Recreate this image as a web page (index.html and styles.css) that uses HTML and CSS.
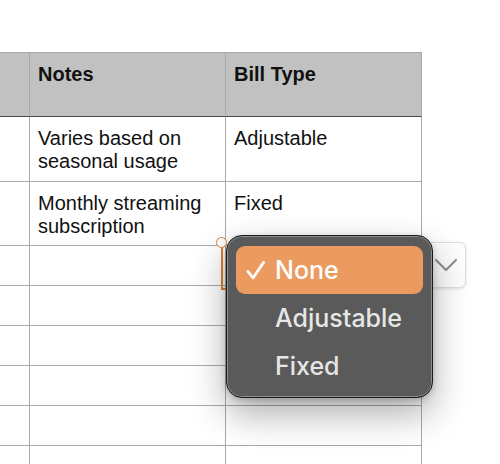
FILE: index.html
```html
<!DOCTYPE html>
<html>
<head>
<meta charset="utf-8">
<link rel="stylesheet" href="styles.css">
</head>
<body>
<div class="sheet">
  <div class="grid">
    <div class="cell head"></div>
    <div class="cell head">Notes</div>
    <div class="cell head">Bill Type</div>

    <div class="cell tall"></div>
    <div class="cell tall">Varies based on seasonal usage</div>
    <div class="cell tall">Adjustable</div>

    <div class="cell tall2"></div>
    <div class="cell tall2">Monthly streaming subscription</div>
    <div class="cell tall2">Fixed</div>

    <div class="cell"></div><div class="cell"></div><div class="cell"></div>
    <div class="cell"></div><div class="cell"></div><div class="cell"></div>
    <div class="cell"></div><div class="cell"></div><div class="cell"></div>
    <div class="cell"></div><div class="cell"></div><div class="cell"></div>
    <div class="cell"></div><div class="cell"></div><div class="cell"></div>
    <div class="cell"></div><div class="cell"></div><div class="cell"></div>
  </div>

  <div class="selection"></div>
  <div class="handle"></div>

  <div class="popup-button">
    <svg width="22" height="14" viewBox="0 0 22 14"><path d="M1 2 L11 12 L21 2" fill="none" stroke="#8d8d8d" stroke-width="2" stroke-linecap="round" stroke-linejoin="round"/></svg>
  </div>

  <div class="menu">
    <div class="item selected">
      <svg class="check" width="20" height="20" viewBox="0 0 20 20"><path d="M2 10.5 L7 17 L17.5 1.5" fill="none" stroke="#fff" stroke-width="2.8" stroke-linecap="round" stroke-linejoin="round"/></svg>
      <span>None</span>
    </div>
    <div class="item"><span>Adjustable</span></div>
    <div class="item"><span>Fixed</span></div>
  </div>
</div>
</body>
</html>
```

FILE: styles.css
```css
html, body {
  margin: 0;
  padding: 0;
  background: #ffffff;
  overflow: hidden;
}

.sheet {
  position: relative;
  width: 500px;
  height: 464px;
  padding-top: 52px;
  box-sizing: border-box;
}

.grid {
  display: grid;
  grid-template-columns: 30px 196px 196px;
  font-family: "Liberation Sans", Arial, sans-serif;
  font-size: 20px;
  line-height: 23px;
  color: #111;
}

.cell {
  box-sizing: border-box;
  height: 40px;
  padding: 10px 8px 0 8px;
  border-right: 1px solid #a9a9a9;
  border-bottom: 1px solid #a9a9a9;
}

.cell:nth-child(3n+1) {
  padding: 0;
}

.head {
  height: 65px;
  background: #c0c1c0;
  border-top: 1px solid #a9a9a9;
  border-bottom: 1px solid #4a4a4a;
  font-weight: bold;
  padding-top: 10px;
}

.tall {
  height: 65px;
  padding-top: 10px;
}

.tall2 {
  height: 64px;
  padding-top: 10px;
}

.selection {
  position: absolute;
  left: 221px;
  top: 242px;
  width: 200px;
  height: 46px;
  border-left: 2px solid #e0822e;
  border-bottom: 2px solid #e0822e;
}

.handle {
  position: absolute;
  left: 216px;
  top: 237px;
  width: 9px;
  height: 9px;
  border: 1.5px solid #e0822e;
  border-radius: 50%;
  background: #fff;
}

.popup-button {
  position: absolute;
  left: 420px;
  top: 242px;
  width: 46px;
  height: 46px;
  box-sizing: border-box;
  background: #fdfdfd;
  border: 1px solid #dedede;
  border-radius: 6px;
  box-shadow: 0 1px 3px rgba(0, 0, 0, 0.12);
  display: flex;
  align-items: center;
  justify-content: flex-end;
  padding-right: 8px;
}

.menu {
  position: absolute;
  left: 226px;
  top: 235px;
  width: 207px;
  height: 163px;
  box-sizing: border-box;
  padding: 10px 9px;
  background: #5a5a5a;
  border: 1px solid #1c1c1c;
  border-radius: 16px;
  box-shadow: inset 0 0 0 1px #8e8e8e, 0 16px 36px rgba(0, 0, 0, 0.32), 0 2px 6px rgba(0, 0, 0, 0.2);
  display: flex;
  flex-direction: column;
  font-family: Inter, "Noto Sans", sans-serif;
  font-size: 25px;
  font-weight: 500;
  line-height: 48px;
  color: #e6e6e6;
}

.item {
  position: relative;
  height: 48px;
  padding-left: 39px;
  border-radius: 9px;
}

.item.selected {
  background: #eb9a60;
  color: #ffffff;
}

.check {
  position: absolute;
  left: 10px;
  top: 15px;
}
```
